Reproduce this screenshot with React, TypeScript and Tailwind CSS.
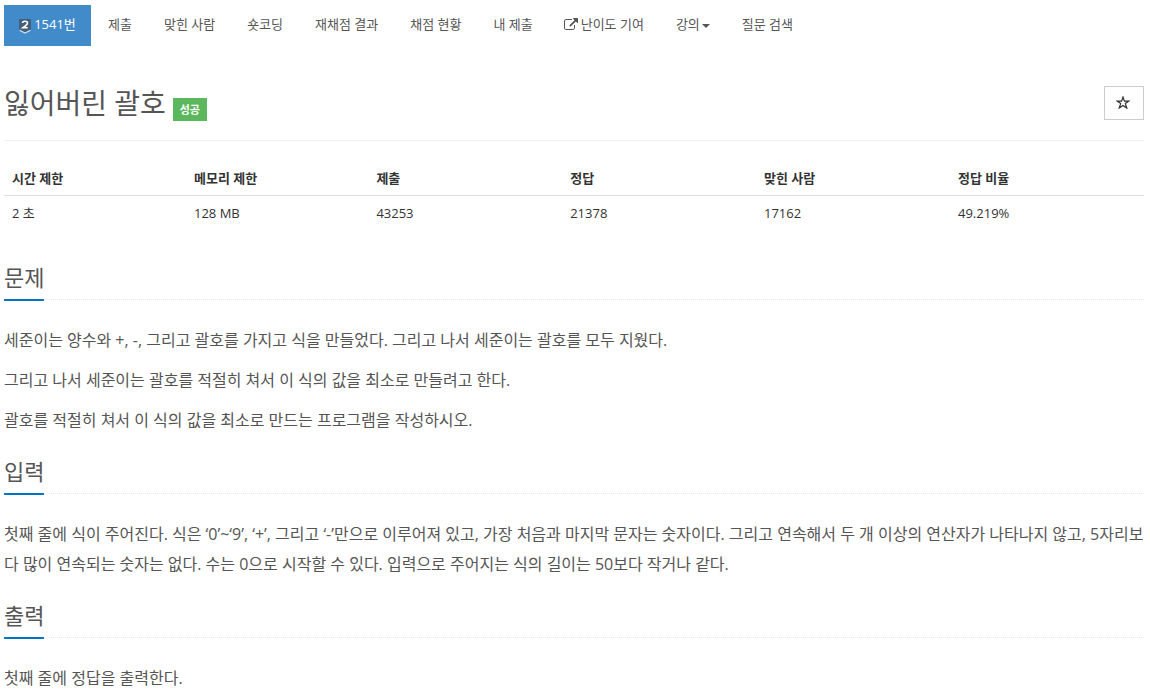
import React from "react";

const menus = ["제출", "맞힌 사람", "숏코딩", "재채점 결과", "채점 현황", "내 제출"];

const limits = [
  { label: "시간 제한", value: "2 초", width: "w-[182px]" },
  { label: "메모리 제한", value: "128 MB", width: "w-[182.4px]" },
  { label: "제출", value: "43253", width: "w-[193.8px]" },
  { label: "정답", value: "21378", width: "w-[193.8px]" },
  { label: "맞힌 사람", value: "17162", width: "w-[194px]" },
  { label: "정답 비율", value: "49.219%", width: "w-[194px]" },
];

const sections = [
  {
    title: "문제",
    texts: [
      "세준이는 양수와 +, -, 그리고 괄호를 가지고 식을 만들었다. 그리고 나서 세준이는 괄호를 모두 지웠다.",
      "그리고 나서 세준이는 괄호를 적절히 쳐서 이 식의 값을 최소로 만들려고 한다.",
      "괄호를 적절히 쳐서 이 식의 값을 최소로 만드는 프로그램을 작성하시오.",
    ],
  },
  {
    title: "입력",
    texts: [
      "첫째 줄에 식이 주어진다. 식은 ‘0’~‘9’, ‘+’, 그리고 ‘-’만으로 이루어져 있고, 가장 처음과 마지막 문자는 숫자이다. 그리고 연속해서 두 개 이상의 연산자가 나타나지 않고, 5자리보다 많이 연속되는 숫자는 없다. 수는 0으로 시작할 수 있다. 입력으로 주어지는 식의 길이는 50보다 작거나 같다.",
    ],
  },
  { title: "출력", texts: ["첫째 줄에 정답을 출력한다."] },
];

const TierIcon = () => (
  <svg className="mt-[14px]" width="12" height="15" viewBox="0 0 12 15">
    <path d="M0 0h12v10.500l-6 3-6-3z" fill="#435f7a" />
    <path d="M0.500 11.300l5.500 2.700 5.500-2.700" fill="none" stroke="#d5dde5" strokeWidth="1.200" />
    <path d="M3.500 4q0-1.700 2.500-1.700t2.500 1.800q0 1.300-2.200 2.900L4 8.700h4.700" fill="none" stroke="#fff" strokeWidth="1.600" />
  </svg>
);

const ExternalIcon = () => (
  <svg className="mt-[13px]" width="14" height="13" viewBox="0 0 1792 1664" fill="currentColor">
    <path d="M1408 928v320q0 119-84.500 203.500T1120 1536H288q-119 0-203.500-84.500T0 1248V416q0-119 84.500-203.500T288 128h704q14 0 23 9t9 23v64q0 14-9 23t-23 9H288q-66 0-113 47t-47 113v832q0 66 47 113t113 47h832q66 0 113-47t47-113V928q0-14 9-23t23-9h64q14 0 23 9t9 23zm384-864v512q0 26-19 45t-45 19-45-19l-176-176-652 652q-10 10-23 10t-23-10L695 983q-10-10-10-23t10-23l652-652-176-176q-19-19-19-45t19-45 45-19h512q26 0 45 19t19 45z" />
  </svg>
);

const StarIcon = () => (
  <svg width="14" height="13" viewBox="0 0 14 13" fill="none" stroke="#333" strokeWidth="1.200">
    <path d="M7 1l1.400 4.100h4.400L9.300 7.600l1.500 4.400L7 9.400l-3.800 2.600 1.500-4.400L1.200 5.100h4.400z" />
  </svg>
);

const App = () => {
  return (
    <main className="h-[694px] overflow-hidden bg-white px-1 pr-[6px] pt-[5px] text-[13px] text-[#333] font-['Open_Sans','Noto_Sans_CJK_KR',sans-serif]">
      <nav className="flex h-[41px] leading-[39px] whitespace-nowrap text-[#555]">
        <a className="flex w-[87px] items-start justify-center gap-[3px] bg-[#428bca] text-white">
          <TierIcon />
          1541번
        </a>
        {menus.map((menu) => (
          <a key={menu} className="ml-[2px] px-[15px]">{menu}</a>
        ))}
        <a className="ml-[2px] flex items-start gap-[3px] pl-[14px] pr-[15px]">
          <ExternalIcon />
          난이도 기여
        </a>
        <a className="ml-[2px] flex items-start gap-[2px] px-[15px]">
          강의
          <span className="mt-[19px] border-x-4 border-t-4 border-x-transparent border-t-[#555]" />
        </a>
        <a className="ml-[2px] px-[15px]">질문 검색</a>
      </nav>

      <header className="flex h-[95px] items-start border-b border-[#eee] pt-[40px]">
        <h1 className="text-[28px] leading-[34px] text-[#555]">잃어버린 괄호</h1>
        <span className="mt-[12px] ml-[7px] h-[23px] w-[34px] bg-[#5cb85c] text-center text-[11px] font-bold leading-[23px] text-white">
          성공
        </span>
        <button className="ml-auto flex h-[34px] w-10 items-center justify-center border border-[#ccc] pr-[2px] pb-[2px]">
          <StarIcon />
        </button>
      </header>

      <section className="mt-[20px]">
        <div className="flex h-[35px] border-b border-[#ddd] font-bold leading-[34px]">
          {limits.map(({ label, width }) => (
            <span key={label} className={`${width} pl-2`}>{label}</span>
          ))}
        </div>
        <div className="flex h-[35px] leading-[35px]">
          {limits.map(({ label, value, width }) => (
            <span key={label} className={`${width} pl-2`}>{value}</span>
          ))}
        </div>
      </section>

      <div className="pt-5">
        {sections.map(({ title, texts }) => (
          <section key={title} className="pt-[9px] text-[#555]">
            <div className="flex h-[40px] border-b border-dotted border-[#e4e9f0]">
              <h2 className="h-[41px] border-b-2 border-[#0076c0] text-[22px] leading-[34px]">{title}</h2>
            </div>
            <div className="pt-[25px]">
              {texts.map((text) => (
                <p key={text} className="mb-[10px] text-[16px] leading-[30px] break-all">{text}</p>
              ))}
            </div>
          </section>
        ))}
      </div>
    </main>
  );
};

export default App;
